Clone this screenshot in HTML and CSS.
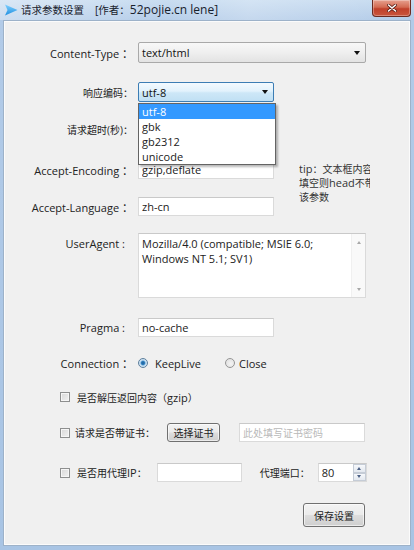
FILE: index.html
```html
<!DOCTYPE html>
<html lang="zh-CN">
<head>
<meta charset="utf-8">
<title>请求参数设置</title>
<link rel="stylesheet" href="styles.css">
</head>
<body>
<div class="window">
  <div class="titlebar">
    <svg class="app-icon" width="14" height="12" viewBox="0 0 14 12">
      <defs>
        <linearGradient id="ig" x1="0" y1="0" x2="0" y2="1">
          <stop offset="0" stop-color="#7fd0ff"/>
          <stop offset="1" stop-color="#1f8fe0"/>
        </linearGradient>
      </defs>
      <path d="M1 0.5 L13.5 6 L1 11.5 L3.5 6 Z" fill="url(#ig)"/>
    </svg>
    <span class="title">请求参数设置&nbsp;&nbsp;&nbsp;&nbsp;[作者：<span class="lat">52pojie.cn lene]</span></span>
    <div class="close">
      <svg width="10" height="8" viewBox="0 0 10 8">
        <path d="M1.5 1 L8.5 7 M8.5 1 L1.5 7" stroke="#5a1d14" stroke-width="3" stroke-linecap="round"/>
        <path d="M1.5 1 L8.5 7 M8.5 1 L1.5 7" stroke="#ffffff" stroke-width="1.6" stroke-linecap="round"/>
      </svg>
    </div>
  </div>

  <div class="client">
    <div class="row r1">
      <span class="label">Content-Type ：</span>
      <div class="select ct"><span>text/html</span><span class="caret"></span></div>
    </div>

    <div class="row r2">
      <span class="label zh">响应编码：</span>
      <div class="select enc"><span>utf-8</span><span class="caret"></span>
        <ul class="dropdown">
          <li class="item sel">utf-8</li>
          <li class="item">gbk</li>
          <li class="item">gb2312</li>
          <li class="item">unicode</li>
        </ul>
      </div>
    </div>

    <div class="row r3">
      <span class="label zh">请求超时(秒)：</span>
      <input class="input" type="text" value="30">
    </div>

    <div class="row r4">
      <span class="label">Accept-Encoding ：</span>
      <input class="input" type="text" value="gzip,deflate">
      <div class="tip zh"><span class="lat">tip</span>：文本框内容不<br>填空则<span class="lat">head</span>不带<br>该参数</div>
    </div>

    <div class="row r5">
      <span class="label">Accept-Language ：</span>
      <input class="input" type="text" value="zh-cn">
    </div>

    <div class="row r6">
      <span class="label top ascii">UserAgent :</span>
      <div class="textarea">
        <div class="ta-text">Mozilla/4.0 (compatible; MSIE 6.0;<br>Windows NT 5.1; SV1)</div>
        <div class="vscroll">
          <span class="sarrow up"></span>
          <span class="sarrow down"></span>
        </div>
      </div>
    </div>

    <div class="row r7">
      <span class="label ascii">Pragma :</span>
      <input class="input" type="text" value="no-cache">
    </div>

    <div class="row r8">
      <span class="label">Connection ：</span>
      <span class="radio checked"></span><span class="rtext first">KeepLive</span>
      <span class="radio second"></span><span class="rtext">Close</span>
    </div>

    <div class="row r9 check-row">
      <span class="checkbox"></span><span class="ctext zh">是否解压返回内容（<span class="lat">gzip</span>）</span>
    </div>

    <div class="row r10 check-row">
      <span class="checkbox"></span><span class="ctext cert zh">请求是否带证书：</span>
      <button class="btn pick zh" type="button">选择证书</button>
      <input class="input pwd zh" type="text" placeholder="此处填写证书密码">
    </div>

    <div class="row r11 check-row">
      <span class="checkbox"></span><span class="ctext zh">是否用代理<span class="lat">IP</span>：</span>
      <input class="input proxy" type="text" value="">
      <span class="port-label zh">代理端口：</span>
      <div class="spin">
        <span class="spin-val">80</span>
        <div class="spin-btns">
          <span class="sb"><span class="sarrow up blue"></span></span>
          <span class="sb"><span class="sarrow down blue"></span></span>
        </div>
      </div>
    </div>

    <div class="row r12 save-row">
      <button class="btn save zh" type="button">保存设置</button>
    </div>
  </div>
</div>
</body>
</html>
```

FILE: styles.css
```css
html, body {
  margin: 0;
  padding: 0;
  background: #a9c5e5;
}

.window {
  width: 414px;
  height: 550px;
  box-sizing: border-box;
  display: flex;
  flex-direction: column;
  background: linear-gradient(180deg, #c6dbf0 0, #b2cbe8 20px, #a8c4e4 100%);
  font-family: "Open Sans", "Noto Sans CJK SC", sans-serif;
  font-size: 11px;
  color: #222;
  overflow: hidden;
}

.zh { font-size: 10px; }
.zh .lat { font-size: 11px; }

/* ---------- title bar ---------- */
.titlebar {
  height: 20px;
  flex: none;
  display: flex;
  align-items: center;
  padding: 0 3px 0 4px;
  background: linear-gradient(100deg, rgba(255,255,255,0.35) 0, rgba(255,255,255,0.05) 40%, rgba(255,255,255,0.25) 60%, rgba(255,255,255,0) 100%);
}

.app-icon {
  flex: none;
  display: block;
  margin-top: -1px;
}

.title {
  margin-left: 3px;
  font-size: 10.5px;
  color: #18212c;
  white-space: nowrap;
  margin-top: -1px;
}

.title .lat { font-size: 12px; }

.close {
  margin-left: auto;
  align-self: flex-start;
  width: 39px;
  height: 17px;
  box-sizing: border-box;
  border: 1px solid #6b2a20;
  border-top: none;
  border-radius: 0 0 4px 4px;
  background: linear-gradient(180deg, #e6a08f 0, #d36a52 45%, #c0402a 55%, #c9553c 100%);
  display: flex;
  align-items: center;
  justify-content: center;
  box-shadow: inset 0 0 0 1px rgba(255,255,255,0.3);
}

.close svg { display: block; }

/* ---------- client area ---------- */
.client {
  flex: 1;
  margin: 0 3px 4px;
  border: 1px solid #9db2c9;
  background: #f0f0f0;
  box-shadow: inset 0 0 0 1px #fbfbfb;
  display: flex;
  flex-direction: column;
}

.row {
  display: flex;
  align-items: center;
  flex: none;
}

.label {
  width: 129px;
  margin-right: 5px;
  text-align: right;
  white-space: nowrap;
  flex: none;
  color: #222;
}

.label.ascii { padding-right: 8px; width: 121px; }
.label.top { align-self: flex-start; line-height: 15px; padding-top: 3px; }

.r1  { margin-top: 21px; height: 21px; }
.r2  { margin-top: 19px; height: 20px; }
.r3  { margin-top: 18px; height: 19px; }
.r4  { margin-top: 21px; height: 19px; }
.r5  { margin-top: 18px; height: 19px; }
.r6  { margin-top: 17px; height: 65px; align-items: flex-start; }
.r7  { margin-top: 20px; height: 19px; }
.r8  { margin-top: 17px; height: 18px; }
.r9  { margin-top: 16px; height: 18px; }
.r10 { margin-top: 17px; height: 19px; }
.r11 { margin-top: 21px; height: 19px; }
.r12 { margin-top: 21px; height: 24px; }

/* ---------- combo boxes ---------- */
.select {
  position: relative;
  box-sizing: border-box;
  display: flex;
  align-items: center;
  justify-content: space-between;
  padding: 0 4px 0 3px;
  border-radius: 2px;
  color: #111;
  flex: none;
}

.select.ct {
  width: 228px;
  height: 21px;
  border: 1px solid #a9a9a9;
  background: linear-gradient(180deg, #f8f8f8 0, #efefef 50%, #e3e3e3 100%);
}

.select.enc {
  width: 136px;
  height: 20px;
  border: 1px solid #3c7db4;
  background: linear-gradient(180deg, #f3faff 0, #e2f2fc 45%, #cde7f7 55%, #c0e0f4 100%);
  z-index: 2;
}

.caret {
  width: 0;
  height: 0;
  border-left: 3.5px solid transparent;
  border-right: 3.5px solid transparent;
  border-top: 4px solid #111;
  margin-right: 1px;
}

.dropdown {
  position: absolute;
  left: -1px;
  top: 20px;
  width: 138px;
  margin: 0;
  padding: 0;
  list-style: none;
  box-sizing: border-box;
  background: #fff;
  border: 1px solid #646464;
  box-shadow: 2px 2px 2px rgba(0,0,0,0.28);
  z-index: 5;
}

.item {
  height: 15px;
  line-height: 15px;
  padding-left: 3px;
  color: #222;
}

.item.sel {
  background: #3399ff;
  color: #fff;
}

/* ---------- text inputs ---------- */
.input {
  width: 136px;
  height: 19px;
  box-sizing: border-box;
  border: 1px solid #dadada;
  border-top-color: #c9c9c9;
  background: #fff;
  font-family: inherit;
  font-size: 11px;
  color: #222;
  padding: 0 3px;
  margin: 0;
  outline: none;
  flex: none;
}

.input.zh { font-size: 10px; }
.input::placeholder { color: #b9b9b9; }

.tip {
  align-self: flex-start;
  margin-left: 25px;
  margin-top: 2px;
  width: 71px;
  height: 44px;
  line-height: 14px;
  white-space: nowrap;
  overflow: hidden;
  color: #333;
  flex: none;
}

/* ---------- multiline box ---------- */
.textarea {
  width: 228px;
  height: 65px;
  box-sizing: border-box;
  border: 1px solid #dadada;
  border-top-color: #c9c9c9;
  background: #fff;
  display: flex;
  flex: none;
}

.ta-text {
  flex: 1;
  padding: 2px 3px;
  line-height: 15px;
  color: #222;
  white-space: nowrap;
}

.vscroll {
  width: 14px;
  background: #f9f9f9;
  border-left: 1px solid #f0f0f0;
  display: flex;
  flex-direction: column;
  justify-content: space-between;
  align-items: center;
  padding: 7px 0 6px;
  box-sizing: border-box;
}

.sarrow {
  width: 0;
  height: 0;
  border-left: 2.5px solid transparent;
  border-right: 2.5px solid transparent;
}

.sarrow.up { border-bottom: 3px solid #a8a8a8; }
.sarrow.down { border-top: 3px solid #a8a8a8; }
.sarrow.up.blue { border-bottom-color: #4d6185; }
.sarrow.down.blue { border-top-color: #4d6185; }

/* ---------- radios ---------- */
.radio {
  width: 10px;
  height: 10px;
  box-sizing: border-box;
  border-radius: 50%;
  border: 1px solid #959595;
  background: radial-gradient(circle at 60% 60%, #f4f4f4 0, #dcdcdc 100%);
  flex: none;
}

.radio.checked {
  background: radial-gradient(circle at 50% 50%, #1e5d93 0, #2f7fbf 30%, #bcd9ef 50%, #eef6fc 100%);
  border-color: #5e7f9c;
}

.radio.second { margin-left: 24px; }

.rtext { margin-left: 4px; color: #222; }
.rtext.first { margin-left: 7px; }

/* ---------- checkboxes ---------- */
.check-row { padding-left: 56px; }

.checkbox {
  width: 10px;
  height: 10px;
  box-sizing: border-box;
  border: 1px solid #8e8f8f;
  background: linear-gradient(135deg, #d8d8d8 0, #f2f2f2 100%);
  box-shadow: inset 0 0 0 1px #f6f6f6;
  flex: none;
}

.ctext { margin-left: 7px; color: #222; white-space: nowrap; }
.ctext.cert { margin-left: 5px; }

/* ---------- buttons ---------- */
.btn {
  box-sizing: border-box;
  border: 1px solid #707070;
  border-radius: 3px;
  background: linear-gradient(180deg, #f3f3f3 0, #ebebeb 48%, #dddddd 52%, #cfcfcf 100%);
  box-shadow: inset 0 0 0 1px rgba(255,255,255,0.6);
  font-family: inherit;
  color: #222;
  padding: 0;
  margin: 0;
  flex: none;
}

.btn.pick { width: 53px; height: 19px; margin-left: 12px; }
.btn.save { width: 62px; height: 24px; }

.input.pwd { width: 126px; margin-left: 19px; }
.input.proxy { width: 85px; margin-left: 10px; }

.port-label { margin-left: 18px; white-space: nowrap; }

.save-row { justify-content: flex-end; padding-right: 45px; }

/* ---------- spin box ---------- */
.spin {
  margin-left: 8px;
  width: 49px;
  height: 19px;
  box-sizing: border-box;
  border: 1px solid #dadada;
  border-top-color: #c9c9c9;
  background: #fff;
  display: flex;
  align-items: center;
  justify-content: space-between;
  flex: none;
}

.spin-val { padding-left: 3px; }

.spin-btns {
  width: 13px;
  height: 100%;
  display: flex;
  flex-direction: column;
}

.sb {
  flex: 1;
  box-sizing: border-box;
  border: 1px solid #c5ccd6;
  background: linear-gradient(180deg, #f6f8fb 0, #e3e8ef 100%);
  display: flex;
  align-items: center;
  justify-content: center;
}
```
